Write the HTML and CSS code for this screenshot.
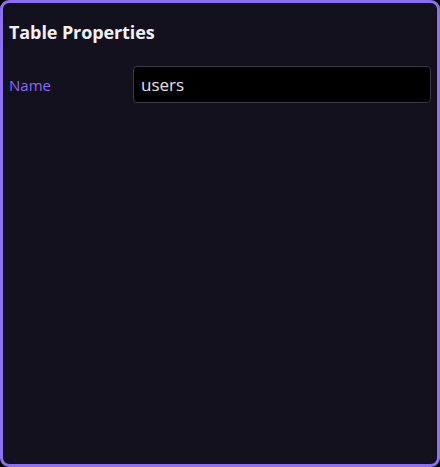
FILE: index.html
```html
<!DOCTYPE html>
<html>
<head>
<meta charset="utf-8">
<link rel="stylesheet" href="styles.css">
</head>
<body>
<div class="panel">
  <h2 class="title">Table Properties</h2>
  <div class="row">
    <label class="label">Name</label>
    <div class="input">users</div>
  </div>
</div>
</body>
</html>
```
FILE: styles.css
```css
html, body {
  margin: 0;
  padding: 0;
  background: #000;
}
.panel {
  box-sizing: border-box;
  width: 440px;
  height: 467px;
  border: 3px solid #8d70f0;
  border-radius: 9px;
  background: #14111f;
  padding: 17px 6px 0 6px;
  font-family: "Open Sans", "Noto Sans", sans-serif;
}
.title {
  margin: 0;
  font-size: 18px;
  font-weight: 700;
  color: #f2f0f5;
  line-height: 24px;
  letter-spacing: -0.1px;
}
.row {
  display: flex;
  align-items: center;
  margin-top: 22px;
}
.label {
  width: 124px;
  color: #8b68f5;
  font-size: 15px;
}
.input {
  flex: 1;
  box-sizing: border-box;
  height: 37px;
  background: #000;
  border: 1px solid #3a3845;
  border-radius: 4px;
  color: #e4e2e8;
  font-size: 17px;
  line-height: 35px;
  padding-left: 7px;
}
```
